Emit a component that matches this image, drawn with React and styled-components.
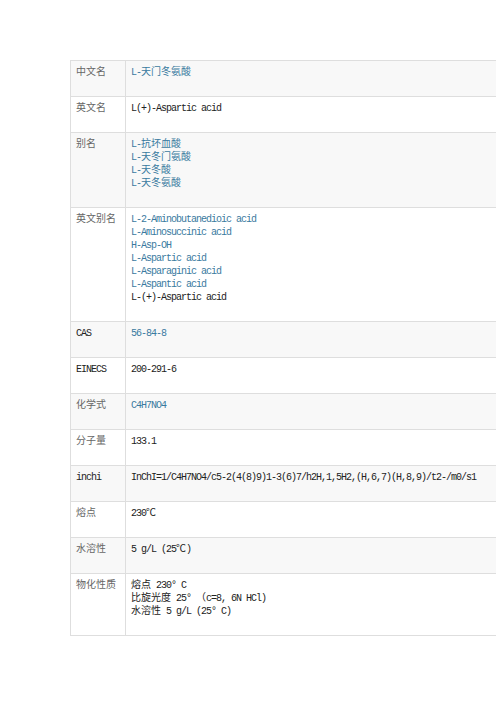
import React from 'react';
import styled, { createGlobalStyle } from 'styled-components';

const GlobalStyle = createGlobalStyle`
  html, body {
    margin: 0;
    padding: 0;
    background: #fff;
  }
`;

const Page = styled.div`
  padding: 60px 0 0 70px;
`;

const Table = styled.div`
  border-top: 1px solid #dedede;
  border-left: 1px solid #dedede;
  font-family: "Liberation Mono", "Noto Sans CJK SC", monospace;
  font-size: 10px;
  letter-spacing: -1px;
  line-height: 13px;
`;

const Row = styled.div`
  display: grid;
  grid-template-columns: 55px 1fr;
  background: ${p => (p.$odd ? '#f8f8f8' : '#fff')};
  border-bottom: 1px solid #dedede;
`;

const Label = styled.div`
  padding: 5px 5px 17px 5px;
  border-right: 1px solid #dedede;
`;

const Value = styled.div`
  padding: 5px 5px 17px 5px;
  display: flex;
  flex-direction: column;
  white-space: nowrap;
  overflow: hidden;
`;

const tones = {
  label: '#666',
  link: '#3a7aa0',
  text: '#222',
};

const Line = styled.span`
  display: block;
  height: 13px;
  color: ${p => tones[p.$tone]};
`;

// CJK runs keep full width; small line-height so they don't grow the line box
const Cjk = styled.span`
  font-family: "Noto Sans CJK SC", sans-serif;
  letter-spacing: 0;
  line-height: 9px;
`;

const cjkRe = /([\u3000-\u9fff\uff00-\uffef℃]+)/;

const renderText = text =>
  text.split(cjkRe).map((part, i) =>
    i % 2 === 1 ? <Cjk key={i}>{part}</Cjk> : part
  );

const rows = [
  { label: '中文名', lines: [['L-天门冬氨酸', true]] },
  { label: '英文名', lines: [['L(+)-Aspartic acid', false]] },
  {
    label: '别名',
    lines: [
      ['L-抗坏血酸', true],
      ['L-天冬门氨酸', true],
      ['L-天冬酸', true],
      ['L-天冬氨酸', true],
    ],
  },
  {
    label: '英文别名',
    lines: [
      ['L-2-Aminobutanedioic acid', true],
      ['L-Aminosuccinic acid', true],
      ['H-Asp-OH', true],
      ['L-Aspartic acid', true],
      ['L-Asparaginic acid', true],
      ['L-Aspantic acid', true],
      ['L-(+)-Aspartic acid', false],
    ],
  },
  { label: 'CAS', lines: [['56-84-8', true]] },
  { label: 'EINECS', lines: [['200-291-6', false]] },
  { label: '化学式', lines: [['C4H7NO4', true]] },
  { label: '分子量', lines: [['133.1', false]] },
  { label: 'inchi', lines: [['InChI=1/C4H7NO4/c5-2(4(8)9)1-3(6)7/h2H,1,5H2,(H,6,7)(H,8,9)/t2-/m0/s1', false]] },
  { label: '熔点', lines: [['230℃', false]] },
  { label: '水溶性', lines: [['5 g/L (25℃)', false]] },
  {
    label: '物化性质',
    lines: [
      ['熔点 230° C', false],
      ['比旋光度 25° （c=8, 6N HCl)', false],
      ['水溶性 5 g/L (25° C)', false],
    ],
  },
];

const App = () => {
  return (
    <Page>
      <GlobalStyle />
      <Table>
        {rows.map((row, i) => (
          <Row key={row.label} $odd={i % 2 === 0}>
            <Label>
              <Line $tone={/^[a-zA-Z]/.test(row.label) ? 'text' : 'label'}>
                {renderText(row.label)}
              </Line>
            </Label>
            <Value>
              {row.lines.map(([text, link]) => (
                <Line key={text} $tone={link ? 'link' : 'text'}>{renderText(text)}</Line>
              ))}
            </Value>
          </Row>
        ))}
      </Table>
    </Page>
  );
};

export default App;
